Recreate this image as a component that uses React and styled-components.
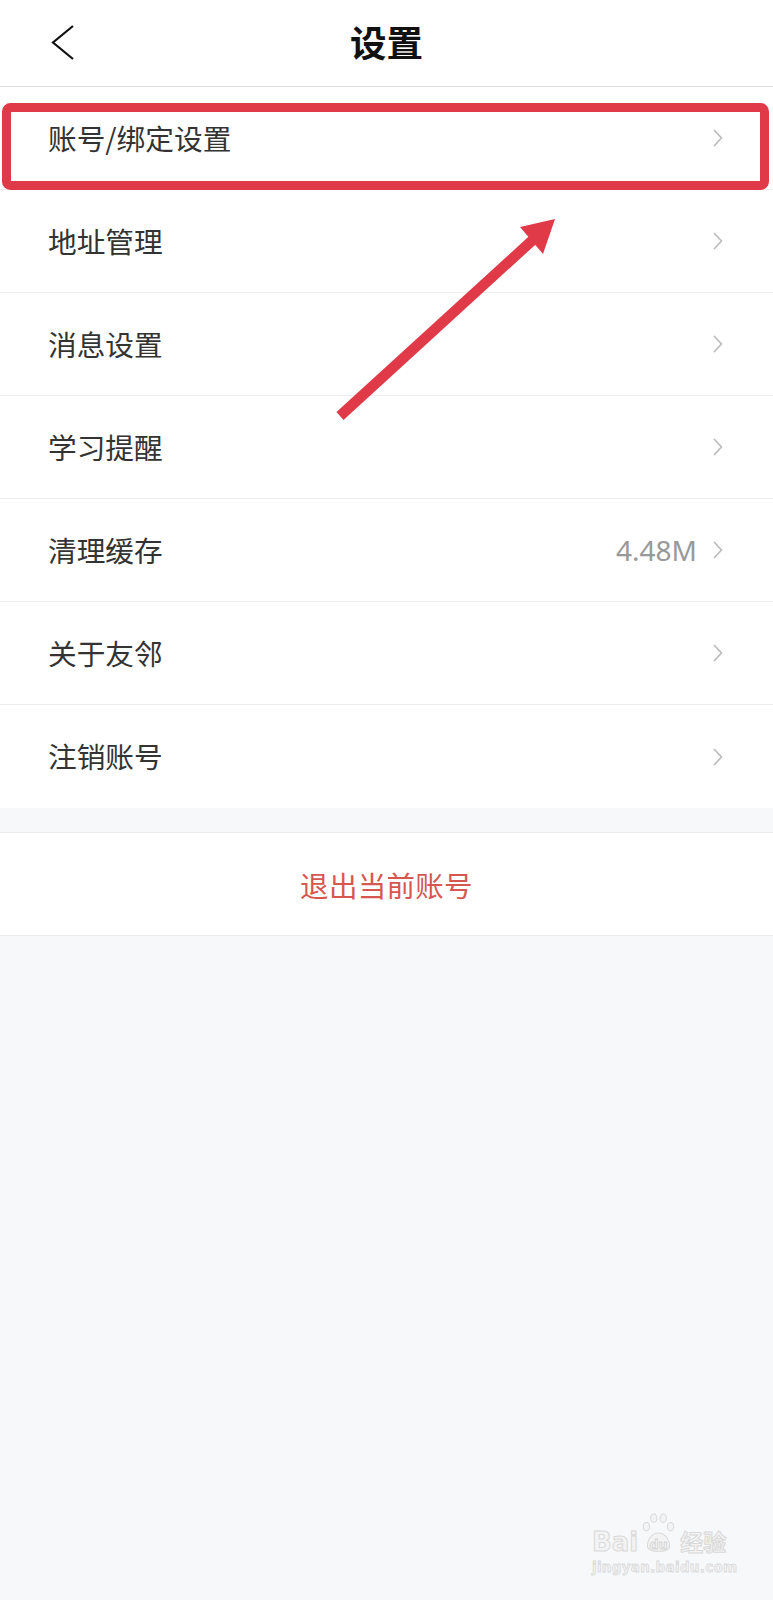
import React from "react";
import styled, { createGlobalStyle } from "styled-components";

const GlobalStyle = createGlobalStyle`
  html, body {
    margin: 0;
    padding: 0;
    background: #f7f8fa;
  }
  body {
    font-family: "Noto Sans CJK SC", "Noto Sans", sans-serif;
  }
`;

const Page = styled.div`
  position: relative;
  width: 773px;
  min-height: 1600px;
  background: #f7f8fa;
  overflow: hidden;
`;

const Header = styled.header`
  box-sizing: border-box;
  height: 87px;
  background: #fff;
  border-bottom: 1px solid #dedede;
  display: grid;
  grid-template-columns: 1fr auto 1fr;
  align-items: center;
`;

const BackButton = styled.div`
  padding-left: 51px;
  display: flex;
  align-items: center;
  height: 100%;
`;

const Title = styled.h1`
  margin: 0;
  font-size: 36.5px;
  font-weight: 700;
  color: #111;
  line-height: 1;
  transform: translateY(-1px);
`;

const List = styled.div`
  background: #fff;
`;

const Row = styled.div`
  box-sizing: border-box;
  height: 103px;
  display: flex;
  align-items: center;
  padding: 0 50px 0 48px;
  border-bottom: ${(p) => (p.$last ? "none" : "1px solid #ededed")};
`;

const Label = styled.span`
  flex: 1;
  font-size: 28.7px;
  color: #333;
  line-height: 1;
`;

const Value = styled.span`
  font-family: "Noto Sans", "Open Sans", sans-serif;
  font-size: 28px;
  color: #999;
  margin-right: 16px;
  line-height: 1;
`;

const LogoutButton = styled.div`
  box-sizing: border-box;
  margin-top: 24px;
  height: 104px;
  background: #fff;
  border-top: 1px solid #ececec;
  border-bottom: 1px solid #ececec;
  display: flex;
  align-items: center;
  justify-content: center;
  font-size: 28.5px;
  color: #d65750;
  letter-spacing: 0.3px;
`;

const Annotation = styled.svg`
  position: absolute;
  left: 0;
  top: 0;
  pointer-events: none;
`;

const Watermark = styled.div`
  position: absolute;
  left: 592px;
  top: 1513px;
  display: flex;
  flex-direction: column;
  align-items: flex-start;
  pointer-events: none;
`;

const MarkTop = styled.div`
  display: flex;
  align-items: flex-end;
  gap: 2px;
`;

const MarkText = styled.span`
  font-family: "DejaVu Sans", "Noto Sans CJK SC", sans-serif;
  font-weight: 700;
  font-size: ${(p) => p.$size}px;
  line-height: 1;
  color: #f3f3f3;
  -webkit-text-stroke: 1px #d9d9d9;
`;

const MarkUrl = styled.span`
  margin-top: 6px;
  font-family: "DejaVu Sans", sans-serif;
  font-weight: 700;
  font-size: 13.5px;
  line-height: 1;
  color: #f3f3f3;
  -webkit-text-stroke: 0.8px #dadada;
  letter-spacing: 0.3px;
`;

const Chevron = () => (
  <svg width="10" height="18" viewBox="0 0 10 18">
    <polyline
      points="1.5,1.5 8.5,9 1.5,16.5"
      fill="none"
      stroke="#bdbdbd"
      strokeWidth="1.8"
      strokeLinecap="round"
      strokeLinejoin="round"
    />
  </svg>
);

const rows = [
  { label: "账号/绑定设置" },
  { label: "地址管理" },
  { label: "消息设置" },
  { label: "学习提醒" },
  { label: "清理缓存", value: "4.48M" },
  { label: "关于友邻" },
  { label: "注销账号" },
];

export default function App() {
  return (
    <>
      <GlobalStyle />
      <Page>
        <Header>
          <BackButton>
            <svg width="26" height="38" viewBox="0 0 26 38">
              <polyline
                points="22,2 2,18.5 22,35"
                fill="none"
                stroke="#111"
                strokeWidth="2.2"
                strokeLinejoin="miter"
              />
            </svg>
          </BackButton>
          <Title>设置</Title>
          <div />
        </Header>
        <List>
          {rows.map((r, i) => (
            <Row key={r.label} $last={i === rows.length - 1}>
              <Label>{r.label}</Label>
              {r.value && <Value>{r.value}</Value>}
              <Chevron />
            </Row>
          ))}
        </List>
        <LogoutButton>退出当前账号</LogoutButton>

        <Annotation width="773" height="460" viewBox="0 0 773 460">
          <rect
            x="6.5"
            y="107.5"
            width="758"
            height="78"
            rx="4"
            fill="none"
            stroke="#e03a48"
            strokeWidth="9"
          />
          <line
            x1="340"
            y1="416"
            x2="536"
            y2="237"
            stroke="#e03a48"
            strokeWidth="10.5"
          />
          <polygon points="555,219 520,227 543,254" fill="#e03a48" />
        </Annotation>

        <Watermark>
          <MarkTop>
            <MarkText $size={26}>Bai</MarkText>
            <svg width="38" height="42" viewBox="0 0 36 40">
              <g fill="#f3f3f3" stroke="#d9d9d9" strokeWidth="1">
                <ellipse cx="6" cy="13" rx="3" ry="4" />
                <ellipse cx="13" cy="5" rx="3" ry="4" />
                <ellipse cx="22" cy="5" rx="3" ry="4" />
                <ellipse cx="29" cy="13" rx="3" ry="4" />
                <path d="M7 32 C7 24 12 19 17.5 19 C23 19 28 24 28 32 C28 38 7 38 7 32 Z" />
              </g>
              <text
                x="17.5"
                y="34"
                textAnchor="middle"
                fontFamily="DejaVu Sans, sans-serif"
                fontWeight="700"
                fontSize="12"
                fill="#f3f3f3"
                stroke="#d4d4d4"
                strokeWidth="0.8"
              >
                du
              </text>
            </svg>
            <MarkText $size={23}>经验</MarkText>
          </MarkTop>
          <MarkUrl>jingyan.baidu.com</MarkUrl>
        </Watermark>
      </Page>
    </>
  );
}
